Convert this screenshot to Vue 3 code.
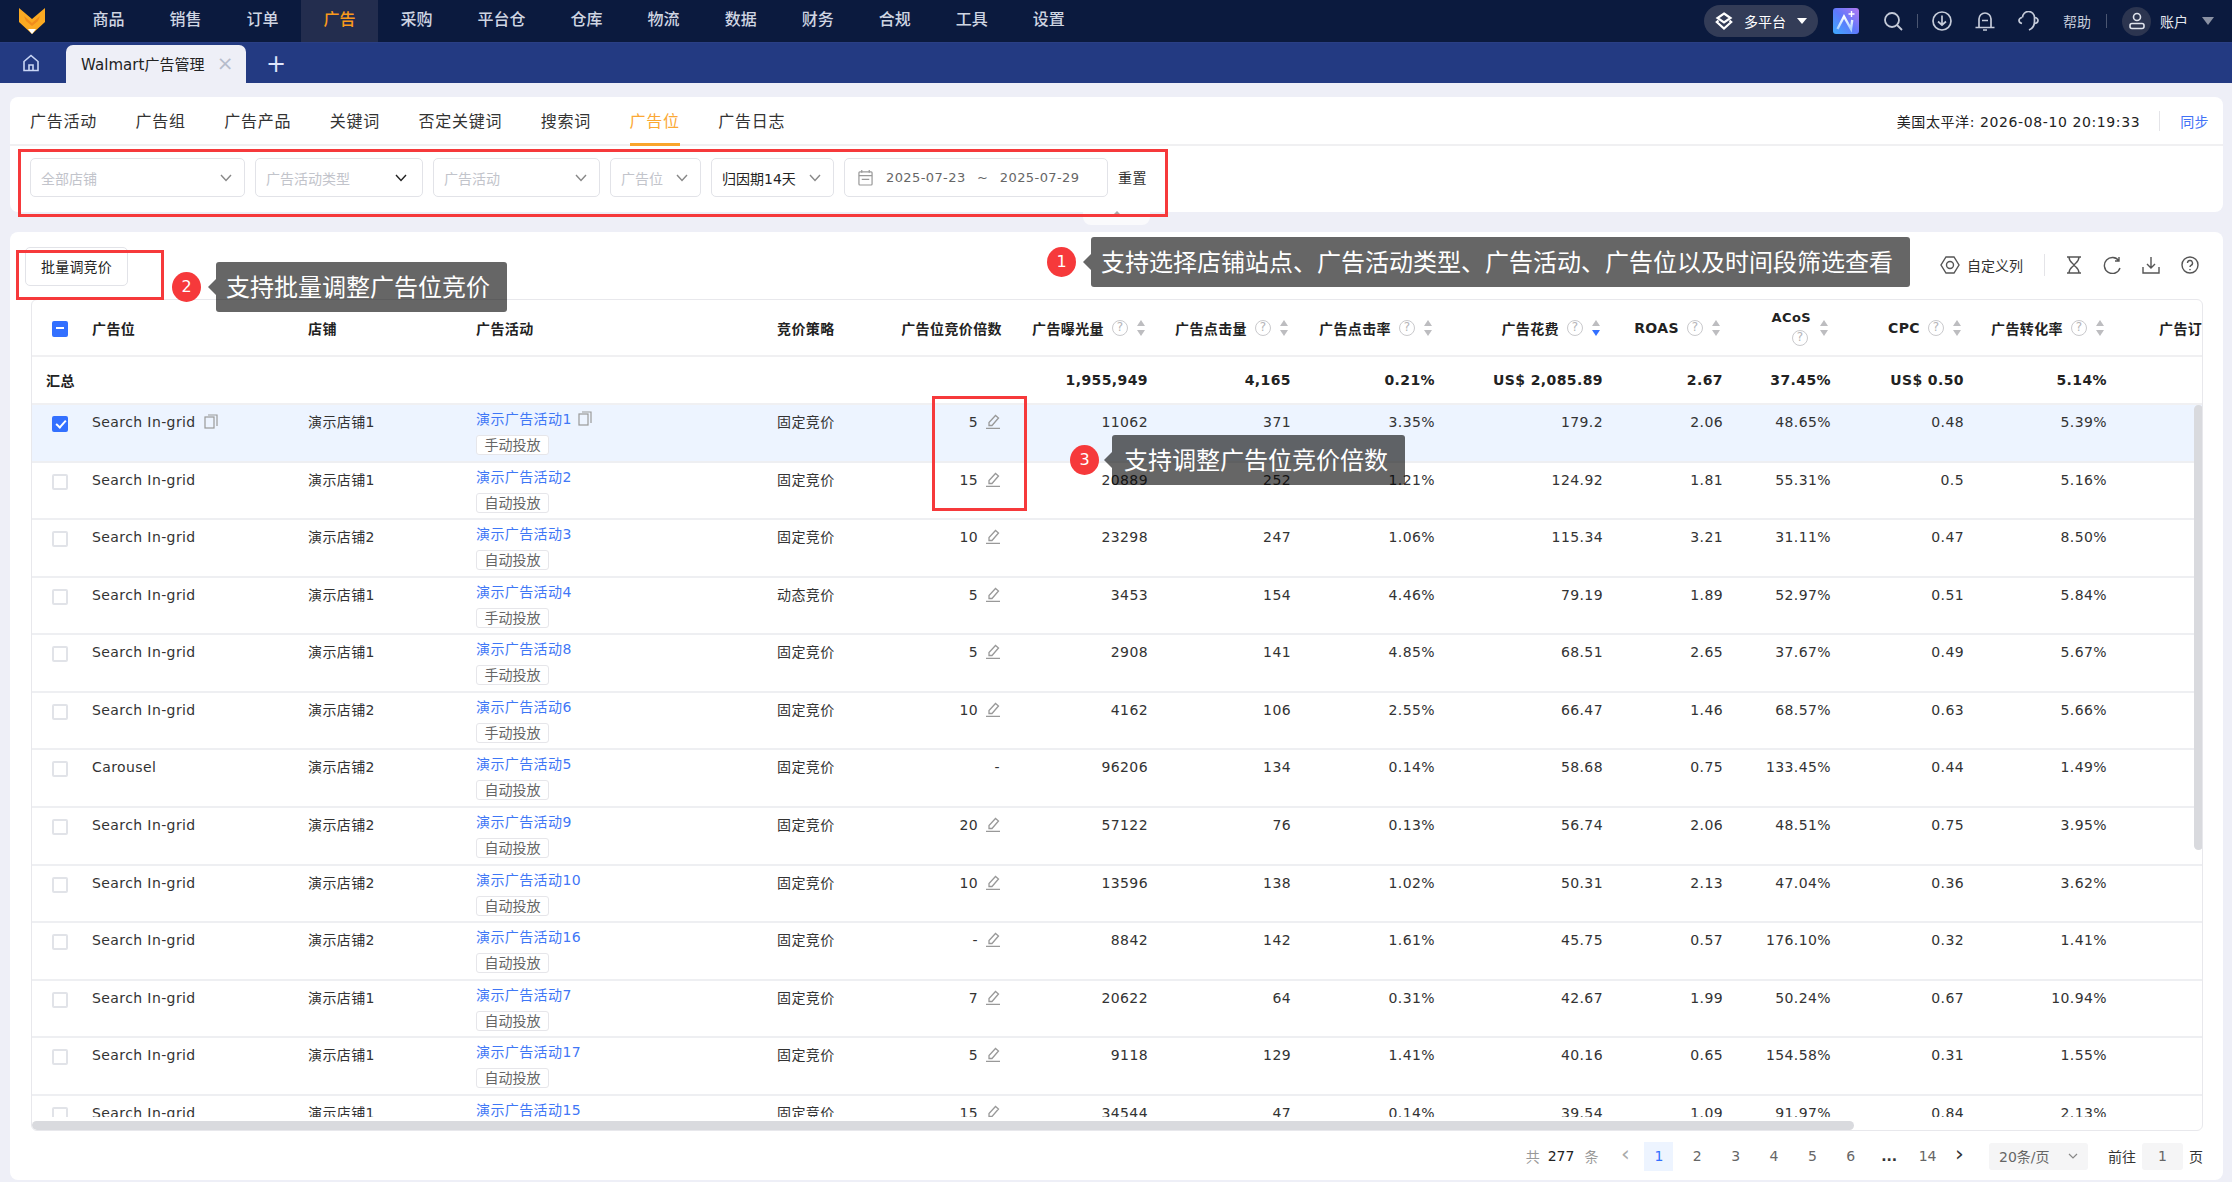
<template>
  <div class="page">
    <header class="topbar">
      <svg class="logo" viewBox="0 0 26 26" width="26" height="26">
        <polygon points="0,0 13,11 26,0 26,14 13,26 0,14" fill="#fbaa22" />
        <polygon points="5,8 13,15 21,8 19,13 13,18 7,13" fill="#f08c1c" />
        <polygon points="9,21 17,21 13,26" fill="#fff" />
      </svg>
      <nav class="main-nav">
        <a v-for="item in navItems" :key="item" class="nav-item" :class="{ active: item === '广告' }">{{ item }}</a>
      </nav>
      <div class="top-right">
        <div class="platform">
          <svg viewBox="0 0 18 18" width="18" height="18" fill="none" stroke="#fff" stroke-width="2.200">
            <path d="M9 1.500 15.500 6 9 10.500 2.500 6Z" />
            <path d="M3.500 8.500 1.800 10 9 16.500 16.200 10 14.500 8.500" />
          </svg>
          <span>多平台</span>
          <i class="caret white"></i>
        </div>
        <svg class="ai-icon" viewBox="0 0 26 26" width="26" height="26">
          <defs>
            <linearGradient id="aiGrad" x1="0" y1="1" x2="1" y2="0">
              <stop offset="0" stop-color="#3dabff" />
              <stop offset="0.5" stop-color="#5f78fb" />
              <stop offset="1" stop-color="#b478f2" />
            </linearGradient>
            <linearGradient id="aiMark" x1="0" y1="1" x2="0" y2="0">
              <stop offset="0" stop-color="#a9d0ff" />
              <stop offset="1" stop-color="#ffffff" />
            </linearGradient>
          </defs>
          <rect width="26" height="26" rx="3" fill="url(#aiGrad)" />
          <path d="M4.500 21 11 8.500l7 12.500 1.200-9" fill="none" stroke="url(#aiMark)" stroke-width="2.400" />
          <path d="M18.500 3v6M15.500 6h6" stroke="#fff" stroke-width="1.400" />
        </svg>
        <svg class="ic search" viewBox="0 0 20 20" width="20" height="20" fill="none" stroke="#c5cbd9" stroke-width="1.800">
          <circle cx="9" cy="9" r="7" /><path d="M14 14l5 5" />
        </svg>
        <span class="vline"></span>
        <svg class="ic dl" viewBox="0 0 20 20" width="20" height="20" fill="none" stroke="#c5cbd9" stroke-width="1.700">
          <circle cx="10" cy="10" r="9" /><path d="M10 4.500v9.500M6 10.500 10 14l4-3.500" />
        </svg>
        <svg class="ic bell" viewBox="0 0 20 20" width="20" height="20" fill="none" stroke="#c5cbd9" stroke-width="1.700">
          <path d="M4 16V8a6 6 0 0 1 12 0v8M0.500 16.500h19M8 19h4M7 9.500h6" />
        </svg>
        <svg class="ic head" viewBox="0 0 21 20" width="21" height="20" fill="none" stroke="#c5cbd9" stroke-width="1.700">
          <path d="M4.500 6.500a6 6 0 0 1 12 0v4c0 4-2 7-5.500 8.500" />
          <path d="M4 6.500C2 7 1 8.500 1 9.500S2 12 4 12.500M17 6.500c2 .5 3 2 3 3s-1 2.500-3 3" />
        </svg>
        <span class="help">帮助</span>
        <span class="vline second"></span>
        <span class="avatar">
          <svg viewBox="0 0 18 18" width="18" height="18" fill="none" stroke="#dfe3ec" stroke-width="1.600">
            <circle cx="9" cy="5" r="3.500" /><rect x="2" y="11.500" width="14" height="5" rx="2" />
          </svg>
        </span>
        <span class="account">账户</span>
        <i class="caret gray"></i>
      </div>
    </header>

    <div class="tabbar">
      <svg class="home" viewBox="0 0 18 18" width="18" height="18" fill="none" stroke="#c9d6f5" stroke-width="1.600">
        <path d="M2 7.500 9 1.500l7 6V16.500H2ZM7 16.500V11h4v5.500" />
      </svg>
      <div class="page-tab">
        <span>Walmart广告管理</span>
        <span class="close">×</span>
      </div>
      <span class="plus">+</span>
    </div>

    <main class="content">
      <section class="card filter-card">
        <div class="sub-tabs">
          <a v-for="t in subTabs" :key="t" class="sub-tab" :class="{ active: t === '广告位' }">{{ t }}</a>
          <div class="sub-right">
            <span class="clock">美国太平洋: 2026-08-10 20:19:33</span>
            <span class="sep"></span>
            <a class="sync">同步</a>
          </div>
        </div>
        <div class="filters">
          <div v-for="f in filters" :key="f.text" class="select" :class="[f.cls, { 'dark-arrow': f.dark }]" :style="{ width: f.width + 'px' }">
            <span>{{ f.text }}</span>
            <svg viewBox="0 0 12 8" width="12" height="8" fill="none" :stroke="f.dark ? '#222' : '#888'" stroke-width="1.400">
              <path d="M1 1l5 5.500L11 1" />
            </svg>
          </div>
          <div class="date-range">
            <svg viewBox="0 0 16 18" width="15" height="17" fill="none" stroke="#999" stroke-width="1.300">
              <rect x="1" y="3" width="14" height="14" rx="1" /><path d="M4 1v3M12 1v3M1 7h14M4 11h8" />
            </svg>
            <span>2025-07-23</span>
            <span class="tilde">~</span>
            <span>2025-07-29</span>
          </div>
          <a class="reset">重置</a>
        </div>
        <div class="collapse"><i></i></div>
      </section>

      <section class="card table-card">
        <div class="toolbar">
          <button class="batch-btn">批量调竞价</button>
          <div class="tools">
            <svg class="t0" viewBox="0 0 20 20" width="20" height="20" fill="none" stroke="#555" stroke-width="1.400">
              <path d="M6 2h8l5 8-5 8H6l-5-8Z" /><circle cx="10" cy="10" r="3.500" />
            </svg>
            <span class="custom">自定义列</span>
            <span class="tool-sep"></span>
            <svg class="t1" viewBox="0 0 16 18" width="16" height="18" fill="none" stroke="#555" stroke-width="1.400">
              <path d="M1 1h14M1 17h14M3 1c0 5 4 6 5 8 1-2 5-3 5-8M3 17c0-5 4-6 5-8 1 2 5 3 5 8" />
            </svg>
            <svg class="t2" viewBox="0 0 18 18" width="18" height="18" fill="none" stroke="#555" stroke-width="1.400">
              <path d="M16 5a8 8 0 1 0 1 7M16 1v4h-4" />
            </svg>
            <svg class="t3" viewBox="0 0 18 18" width="18" height="18" fill="none" stroke="#555" stroke-width="1.400">
              <path d="M9 1v11M5 8l4 4 4-4M1 11v6h16v-6" />
            </svg>
            <svg class="t4" viewBox="0 0 18 18" width="18" height="18" fill="none" stroke="#555" stroke-width="1.400">
              <circle cx="9" cy="9" r="8" /><path d="M6.500 7a2.500 2.500 0 1 1 3.500 2.300c-.7.4-1 .8-1 1.700M9 13v1.200" />
            </svg>
          </div>
        </div>

        <div class="table-wrap">
          <div class="table-scroll">
            <table class="grid">
              <colgroup>
                <col v-for="(w, i) in colWidths" :key="i" :style="{ width: w + 'px' }" />
              </colgroup>
              <thead>
                <tr>
                  <th class="check-cell"><span class="check minus"></span></th>
                  <th v-for="h in leftHeads" :key="h" class="left">{{ h }}</th>
                  <th v-for="h in metricHeads" :key="h.label" class="metric-head">
                    <div class="head-inner" :class="{ stacked: h.stacked }">
                      <template v-if="h.stacked">
                        <div class="stack">
                          <span>{{ h.label }}</span>
                          <span class="q">?</span>
                        </div>
                      </template>
                      <template v-else>
                        <span>{{ h.label }}</span>
                        <span v-if="h.tip" class="q">?</span>
                      </template>
                      <span v-if="h.sort" class="sort">
                        <i class="up"></i>
                        <i class="down" :class="{ on: h.on }"></i>
                      </span>
                    </div>
                  </th>
                </tr>
              </thead>
              <tbody>
                <tr class="sum-row">
                  <td class="sum-label" colspan="2">汇总</td>
                  <td></td>
                  <td></td>
                  <td></td>
                  <td></td>
                  <td v-for="(s, i) in summary" :key="i" class="num">{{ s }}</td>
                  <td></td>
                </tr>
                <tr v-for="(r, i) in rows" :key="i" class="data-row" :class="{ selected: i === 0 }">
                  <td class="check-cell"><span class="check" :class="{ checked: i === 0 }"></span></td>
                  <td class="left">
                    {{ r.place }}
                    <svg v-if="i === 0" class="copy" viewBox="0 0 14 15" width="14" height="15" fill="none" stroke="#999" stroke-width="1.200">
                      <rect x="1" y="3" width="9" height="11" /><path d="M4 1h9v11" />
                    </svg>
                  </td>
                  <td class="left">{{ r.shop }}</td>
                  <td class="left">
                    <a class="camp">{{ r.camp }}</a>
                    <svg v-if="i === 0" class="copy camp-copy" viewBox="0 0 14 15" width="14" height="15" fill="none" stroke="#999" stroke-width="1.200">
                      <rect x="1" y="3" width="9" height="11" /><path d="M4 1h9v11" />
                    </svg>
                    <span class="tag">{{ r.tag }}</span>
                  </td>
                  <td class="left">{{ r.bid }}</td>
                  <td class="mult">
                    <span class="mult-val">{{ r.mult }}</span>
                    <svg v-if="r.edit" class="pen" viewBox="0 0 14 15" width="14" height="15" fill="none" stroke="#999" stroke-width="1.300">
                      <path d="M3 11.500V8.500L9.500 1.500l3 2.500L6 11.500ZM0 14.300h14" />
                    </svg>
                  </td>
                  <td v-for="(v, k) in r.vals" :key="k" class="num">{{ v }}</td>
                  <td></td>
                </tr>
              </tbody>
            </table>
          </div>
          <div class="hbar"><i></i></div>
          <div class="vbar"></div>
        </div>

        <div class="pager">
          <span class="muted">共</span>
          <span class="total">277</span>
          <span class="muted">条</span>
          <span class="arrow prev">‹</span>
          <span v-for="p in pages" :key="p" class="pg" :class="{ current: p === '1', dots: p === '...' }">{{ p }}</span>
          <span class="arrow next">›</span>
          <div class="size">
            <span>20条/页</span>
            <svg viewBox="0 0 10 6" width="10" height="6" fill="none" stroke="#888" stroke-width="1.200"><path d="M1 1l4 4 4-4" /></svg>
          </div>
          <span class="goto">前往</span>
          <span class="goto-input">1</span>
          <span class="goto-end">页</span>
        </div>
      </section>
    </main>

    <!-- annotations painted over the screenshot -->
    <div class="mark box1"></div>
    <div class="mark box2"></div>
    <div class="mark box3"></div>
    <span class="badge b1">1</span>
    <div class="tip t-one">支持选择店铺站点、广告活动类型、广告活动、广告位以及时间段筛选查看</div>
    <span class="badge b2">2</span>
    <div class="tip t-two">支持批量调整广告位竞价</div>
    <span class="badge b3">3</span>
    <div class="tip t-three">支持调整广告位竞价倍数</div>
  </div>
</template>

<script setup>
const navItems = ['商品', '销售', '订单', '广告', '采购', '平台仓', '仓库', '物流', '数据', '财务', '合规', '工具', '设置']
const subTabs = ['广告活动', '广告组', '广告产品', '关键词', '否定关键词', '搜索词', '广告位', '广告日志']

const filters = [
  { text: '全部店铺', width: 215, cls: 'ph' },
  { text: '广告活动类型', width: 168, cls: 'ph', dark: true },
  { text: '广告活动', width: 167, cls: 'ph' },
  { text: '广告位', width: 91, cls: 'ph' },
  { text: '归因期14天', width: 123, cls: '' }
]

const colWidths = [53, 216, 168, 301, 121, 121, 144, 143, 144, 168, 120, 108, 133, 143, 168]
const leftHeads = ['广告位', '店铺', '广告活动', '竞价策略']
const metricHeads = [
  { label: '广告位竞价倍数' },
  { label: '广告曝光量', tip: true, sort: true },
  { label: '广告点击量', tip: true, sort: true },
  { label: '广告点击率', tip: true, sort: true },
  { label: '广告花费', tip: true, sort: true, on: true },
  { label: 'ROAS', tip: true, sort: true },
  { label: 'ACoS', stacked: true, sort: true },
  { label: 'CPC', tip: true, sort: true },
  { label: '广告转化率', tip: true, sort: true },
  { label: '广告订单量', tip: true, sort: true }
]

const summary = ['1,955,949', '4,165', '0.21%', 'US$ 2,085.89', '2.67', '37.45%', 'US$ 0.50', '5.14%']

function row(place, shop, n, tag, bid, mult, edit, ...vals) {
  return { place, shop, camp: '演示广告活动' + n, tag, bid, mult, edit, vals }
}

const SI = 'Search In-grid'
const S1 = '演示店铺1'
const S2 = '演示店铺2'
const HAND = '手动投放'
const AUTO = '自动投放'
const FIX = '固定竞价'

const rows = [
  row(SI, S1, 1, HAND, FIX, '5', true, '11062', '371', '3.35%', '179.2', '2.06', '48.65%', '0.48', '5.39%'),
  row(SI, S1, 2, AUTO, FIX, '15', true, '20889', '252', '1.21%', '124.92', '1.81', '55.31%', '0.5', '5.16%'),
  row(SI, S2, 3, AUTO, FIX, '10', true, '23298', '247', '1.06%', '115.34', '3.21', '31.11%', '0.47', '8.50%'),
  row(SI, S1, 4, HAND, '动态竞价', '5', true, '3453', '154', '4.46%', '79.19', '1.89', '52.97%', '0.51', '5.84%'),
  row(SI, S1, 8, HAND, FIX, '5', true, '2908', '141', '4.85%', '68.51', '2.65', '37.67%', '0.49', '5.67%'),
  row(SI, S2, 6, HAND, FIX, '10', true, '4162', '106', '2.55%', '66.47', '1.46', '68.57%', '0.63', '5.66%'),
  row('Carousel', S2, 5, AUTO, FIX, '-', false, '96206', '134', '0.14%', '58.68', '0.75', '133.45%', '0.44', '1.49%'),
  row(SI, S2, 9, AUTO, FIX, '20', true, '57122', '76', '0.13%', '56.74', '2.06', '48.51%', '0.75', '3.95%'),
  row(SI, S2, 10, AUTO, FIX, '10', true, '13596', '138', '1.02%', '50.31', '2.13', '47.04%', '0.36', '3.62%'),
  row(SI, S2, 16, AUTO, FIX, '-', true, '8842', '142', '1.61%', '45.75', '0.57', '176.10%', '0.32', '1.41%'),
  row(SI, S1, 7, AUTO, FIX, '7', true, '20622', '64', '0.31%', '42.67', '1.99', '50.24%', '0.67', '10.94%'),
  row(SI, S1, 17, AUTO, FIX, '5', true, '9118', '129', '1.41%', '40.16', '0.65', '154.58%', '0.31', '1.55%'),
  row(SI, S1, 15, AUTO, FIX, '15', true, '34544', '47', '0.14%', '39.54', '1.09', '91.97%', '0.84', '2.13%')
]

const pages = ['1', '2', '3', '4', '5', '6', '...', '14']
</script>

<style>
html, body { margin: 0; background: #eeeff7; overflow: hidden; }
</style>

<style scoped>
.page {
  position: relative;
  width: 2232px;
  height: 1182px;
  overflow: hidden;
  background: #eeeff7;
  font-family: "DejaVu Sans", "Noto Sans CJK SC", sans-serif;
  font-size: 14px;
  letter-spacing: 0.4px;
  color: #333;
}

/* top bar */
.topbar {
  height: 42px;
  border-bottom: 1px solid #2a3f85;
  background: #0b1a3e;
  display: flex;
  align-items: center;
}
.logo { margin-left: 19px; flex: none; }
.main-nav { display: flex; margin-left: 25px; height: 100%; }
.nav-item {
  padding: 0 22.500px;
  font-size: 16px;
  letter-spacing: 0;
  line-height: 39px;
  color: #cfd5e2;
  font-weight: 500;
}
.nav-item.active { background: #232d4e; color: #f99a1c; }
.top-right { margin-left: auto; display: flex; align-items: center; color: #d5dae5; height: 100%; letter-spacing: 0; }
.platform {
  width: 114px;
  height: 32px;
  border-radius: 16px;
  background: #333c57;
  display: flex;
  align-items: center;
  box-sizing: border-box;
  padding-left: 11px;
  color: #fff;
  gap: 11px;
}
.caret { width: 0; height: 0; border-left: 5px solid transparent; border-right: 5px solid transparent; }
.caret.white { border-top: 6px solid #fff; }
.caret.gray { border-left-width: 6px; border-right-width: 6px; border-top: 8px solid #8a91a3; margin: 0 18px 0 14px; }
.ai-icon { margin-left: 15px; }
.ic.search { margin-left: 24px; }
.vline { width: 1px; height: 14px; background: #4b5671; margin-left: 14px; }
.ic.dl { margin-left: 14px; }
.ic.bell { margin-left: 23px; }
.ic.head { margin-left: 23px; }
.help { margin-left: 24px; color: #c5cbd9; }
.vline.second { margin-left: 15px; }
.avatar {
  width: 29px;
  height: 29px;
  border-radius: 50%;
  background: #2c3550;
  display: flex;
  align-items: center;
  justify-content: center;
  margin-left: 15px;
}
.account { margin-left: 9px; color: #e6e9f0; }

/* page tab strip */
.tabbar {
  height: 40px;
  background: #233a82;
  display: flex;
  align-items: flex-end;
  position: relative;
}
.home { margin: 0 26px 11px 22px; }
.page-tab {
  width: 180px;
  height: 38px;
  background: #eeeff7;
  border-radius: 7px 7px 0 0;
  box-sizing: border-box;
  padding: 0 0 2px 15px;
  display: flex;
  align-items: center;
  font-size: 15px;
  letter-spacing: 0.050px;
  color: #222;
}
.close { margin-left: 12px; color: #b6bccb; font-size: 20px; line-height: 20px; }
.plus { color: #dfe6fb; font-size: 24px; line-height: 38px; margin-left: 20px; letter-spacing: 0; }

/* main */
.content { padding: 14px 9px 0 10px; display: flex; flex-direction: column; gap: 20px; }
.card { background: #fff; border-radius: 8px; position: relative; }
.filter-card { height: 115px; }
.sub-tabs {
  height: 47px;
  border-bottom: 2px solid #f0f0f2;
  display: flex;
  padding-left: 20px;
  gap: 38.500px;
  box-sizing: content-box;
}
.sub-tab {
  font-size: 16px;
  letter-spacing: 0.750px;
  line-height: 49px;
  height: 47px;
  color: #333;
  box-sizing: border-box;
}
.sub-tab.active { color: #fba834; border-bottom: 3px solid #f9a52c; height: 49px; }
.sub-right { margin-left: auto; display: flex; align-items: center; padding-right: 14px; height: 47px; }
.clock { font-size: 14px; letter-spacing: 0.600px; color: #222; }
.sep { width: 1px; height: 20px; background: #e4e4e8; margin: 0 20px 0 19px; }
.sync { color: #4272f6; font-size: 14px; }
.filters { display: flex; gap: 10px; padding: 12px 0 0 20px; align-items: flex-start; }
.select, .date-range {
  height: 39px;
  box-sizing: border-box;
  border: 1px solid #e2e3e8;
  border-radius: 5px;
  display: flex;
  align-items: center;
  justify-content: space-between;
  padding: 0 12px 0 10px;
  color: #222;
  letter-spacing: 0;
}
.select.dark-arrow { padding-right: 15px; }
.select.ph { color: #c2c4cb; }
.date-range { width: 264px; justify-content: flex-start; gap: 10px; padding: 0 13px; color: #666; font-size: 13px; letter-spacing: 0.400px; }
.date-range svg { margin-right: 3px; }
.tilde { margin: 0 1.500px; }
.reset { margin: 9px 0 0 0; font-size: 14px; letter-spacing: 0.400px; color: #333; }
.collapse {
  position: absolute;
  left: 1073px;
  top: 115px;
  width: 67px;
  height: 13px;
  background: #fafafc;
  border-radius: 0 0 8px 8px;
  display: flex;
  justify-content: center;
}
.collapse i { width: 0; height: 0; border-left: 6px solid transparent; border-right: 6px solid transparent; border-bottom: 6px solid #aaa; margin-top: -1px; }

.table-card { height: 948px; padding-left: 21px; box-sizing: border-box; }
.toolbar { height: 67px; position: relative; display: flex; justify-content: space-between; padding-right: 24px; }
.batch-btn {
  width: 103px;
  height: 39px;
  margin: 15px 0 0 -6px;
  background: #fff;
  border: 1px solid #e2e3e8;
  border-radius: 5px;
  font: inherit;
  letter-spacing: 0.200px;
  color: #222;
  padding: 0 0 2px;
}
.tools { display: flex; align-items: center; height: 65px; }
.t0 { margin-right: 0; }
.custom { margin-left: 7px; letter-spacing: 0; }
.tool-sep { width: 1px; height: 22px; background: #e4e4e8; margin: 0 21px; }
.t2, .t3, .t4 { margin-left: 21px; }

.table-wrap {
  position: relative;
  width: 2172px;
  border: 1px solid #e8e8ec;
  border-radius: 6px;
  box-sizing: border-box;
  height: 832px;
  overflow: hidden;
}
.table-scroll { height: 817px; overflow: hidden; }
.grid { border-collapse: separate; border-spacing: 0; table-layout: fixed; width: 2251px; color: #333; }
.grid th { height: 57px; box-sizing: border-box; border-bottom: 2px solid #f0f0f2; padding: 0 10px 0 8px; color: #222; font-weight: 700; vertical-align: middle; }
.grid .left { text-align: left; padding-left: 7px; }
.grid th.left { font-weight: 700; }
.check-cell { padding: 2px 0 0 20px !important; text-align: left; }
.sum-row td { height: 48px; box-sizing: border-box; border-bottom: 2px solid #f0f0f2; padding: 0 8px; font-weight: 700; color: #222; }
.sum-row .sum-label { padding-left: 14px; }
.num { text-align: right; white-space: nowrap; }
.data-row td { height: 57.580px; box-sizing: border-box; border-bottom: 2px solid #eeeff2; padding: 9px 8px 0; line-height: 16px; vertical-align: top; white-space: nowrap; }
.data-row td.left { padding-left: 7px; }
.data-row.selected td { background: #edf4ff; }
.data-row .check-cell { padding-top: 11px !important; padding-left: 20px !important; }
.check {
  display: block;
  width: 16px;
  height: 16px;
  border: 2px solid #e1e3e8;
  border-radius: 2px;
  box-sizing: border-box;
  position: relative;
  background: #fff;
}
.check.minus { background: #3370ff; border-color: #3370ff; }
.check.minus::after { content: ""; position: absolute; left: 2px; right: 2px; top: 4.500px; height: 2px; background: #fff; }
.check.checked { background: #3370ff; border-color: #3370ff; }
.check.checked::after { content: ""; position: absolute; left: 3.500px; top: 0; width: 4px; height: 8px; border: solid #fff; border-width: 0 2px 2px 0; transform: rotate(42deg); }
.copy { margin-left: 4px; vertical-align: -2px; }
.camp { color: #3f77f6; position: relative; top: -3px; }
.camp-copy { position: relative; top: -3px; margin-left: 6px; }
.tag {
  display: block;
  width: 73px;
  height: 20px;
  margin-top: 5px;
  border: 1px solid #e6e6ea;
  border-radius: 3px;
  box-sizing: border-box;
  background: #fff;
  color: #666;
  text-align: center;
  line-height: 18px;
  font-size: 14px;
  letter-spacing: 0;
}
.data-row td.mult { text-align: right; padding-right: 12px; }
.mult-val { display: inline-block; }
.pen { margin-left: 8px; vertical-align: -2px; }

.head-inner { display: flex; justify-content: flex-end; align-items: center; gap: 8px; white-space: nowrap; }
.stack { display: flex; flex-direction: column; align-items: flex-end; gap: 3px; font-size: 13px; line-height: 18px; margin-top: -1px; }
.stack .q { margin-right: 3px; }
.q {
  width: 16px;
  height: 16px;
  border: 1.500px solid #c9c9cc;
  border-radius: 50%;
  box-sizing: border-box;
  font-size: 12px;
  font-weight: 400;
  line-height: 13px;
  text-align: center;
  color: #b5b5b8;
  letter-spacing: 0;
  flex: none;
}
.sort { display: flex; flex-direction: column; gap: 4px; flex: none; width: 10px; align-items: center; }
.sort i { width: 0; height: 0; border-left: 4.500px solid transparent; border-right: 4.500px solid transparent; }
.sort .up { border-bottom: 6px solid #bdbdc0; }
.sort .down { border-top: 6px solid #bdbdc0; }
.sort .down.on { border-top-color: #3370ff; }

.hbar { height: 13px; position: relative; }
.hbar i { position: absolute; left: 0; bottom: 0; width: 1822px; height: 9px; background: #d9dade; border-radius: 5px; }
.vbar { position: absolute; left: 2162px; top: 105px; width: 9px; height: 445px; background: #d9dade; border-radius: 5px; }

.pager {
  height: 50px;
  display: flex;
  align-items: center;
  justify-content: flex-end;
  padding-right: 20px;
  letter-spacing: 0;
}
.muted { color: #999; }
.total { margin: 0 10px 0 8px; color: #222; font-size: 14px; }
.arrow { width: 16px; text-align: center; font-size: 22px; line-height: 22px; color: #aaa; margin: -4px 11px 0 19px; }
.arrow.next { color: #333; margin: -4px 21.500px 0 0; }
.pg { width: 29px; height: 29px; line-height: 29px; text-align: center; margin-right: 9.400px; color: #666; }
.pg.current { background: #edf4ff; color: #3370ff; }
.pg.dots { color: #333; font-weight: 700; }
.size {
  width: 99px;
  height: 27px;
  background: #f5f5f6;
  border-radius: 3px;
  box-sizing: border-box;
  padding: 0 10px;
  display: flex;
  align-items: center;
  justify-content: space-between;
  color: #666;
}
.goto { margin-left: 20px; color: #333; }
.goto-input { width: 41px; height: 27px; line-height: 27px; text-align: center; background: #f5f5f6; margin: 0 6px; color: #666; border-radius: 3px; }

/* annotations */
.mark { position: absolute; border: 3px solid #f6393b; box-sizing: border-box; }
.box1 { left: 18px; top: 149px; width: 1150px; height: 68px; }
.box2 { left: 16px; top: 250px; width: 148px; height: 50px; }
.box3 { left: 932px; top: 396px; width: 95px; height: 115px; }
.badge {
  position: absolute;
  width: 29px;
  height: 30px;
  border-radius: 50%;
  background: #f6393b;
  color: #fff;
  font-size: 16px;
  letter-spacing: 0;
  line-height: 30px;
  text-align: center;
}
.b1 { left: 1047px; top: 247px; }
.b2 { left: 172px; top: 272px; }
.b3 { left: 1070px; top: 445px; }
.tip {
  position: absolute;
  height: 50px;
  background: rgba(0, 0, 0, 0.6);
  color: #fff;
  font-size: 24px;
  letter-spacing: 0;
  line-height: 52px;
  border-radius: 3px;
  padding: 0 10px;
  box-sizing: border-box;
  white-space: nowrap;
}
.tip::before {
  content: "";
  position: absolute;
  left: -8px;
  top: 17px;
  border-top: 8px solid transparent;
  border-bottom: 8px solid transparent;
  border-right: 8px solid rgba(0, 0, 0, 0.6);
}
.t-one { left: 1091px; top: 237px; width: 819px; }
.t-two { left: 216px; top: 262px; width: 291px; }
.t-three { left: 1112px; top: 435px; width: 293px; padding-left: 12px; }
</style>
